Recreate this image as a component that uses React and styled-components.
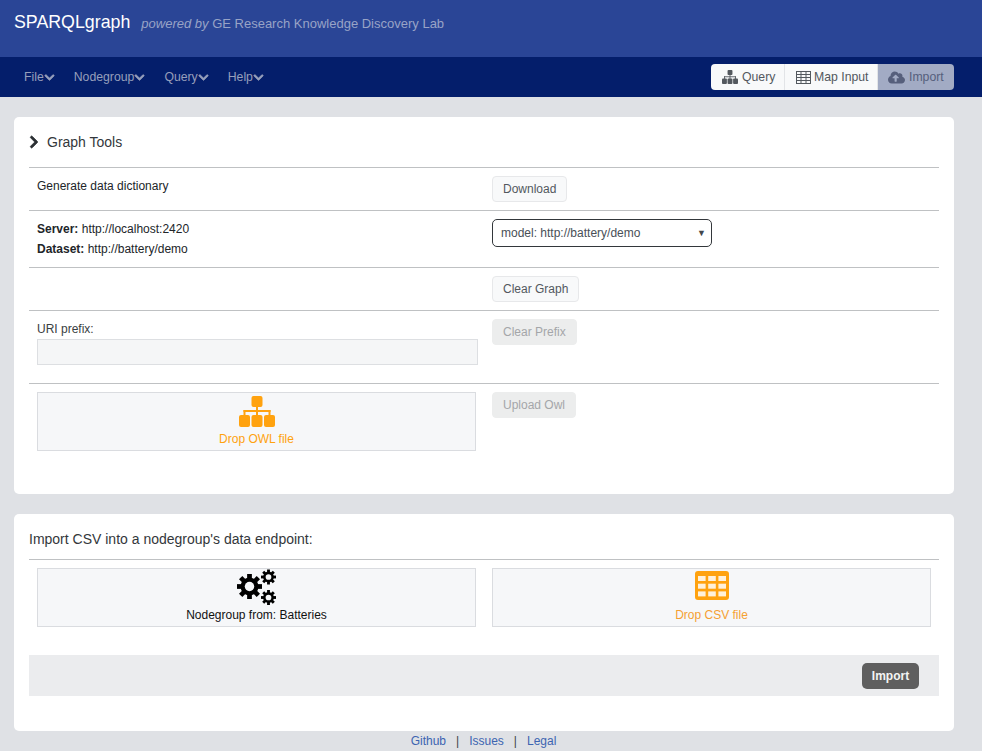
import React from 'react';
import styled, { createGlobalStyle } from 'styled-components';
import { FaChevronDown, FaChevronRight, FaCloudUploadAlt } from 'react-icons/fa';

const GlobalStyle = createGlobalStyle`
  html, body {
    margin: 0;
    padding: 0;
    height: 751px;
    overflow: hidden;
    background: #dfe1e5;
    font-family: "Liberation Sans", Arial, sans-serif;
    font-size: 12.25px;
    color: #212529;
  }
  * { box-sizing: border-box; }
`;

const Banner = styled.header`
  height: 57px;
  background: #2a4596;
  padding: 12px 14px 0;
  display: flex;
  align-items: baseline;
  gap: 11px;
`;

const Brand = styled.span`
  color: #fff;
  font-size: 17.8px;
`;

const Tagline = styled.span`
  color: #98a3c6;
  font-size: 13px;
`;

const NavBar = styled.nav`
  height: 40px;
  background: #041e6b;
  padding: 0 28px 0 24px;
  display: flex;
  align-items: center;
  justify-content: space-between;
`;

const Menus = styled.div`
  display: flex;
  gap: 19px;
`;

const Menu = styled.span`
  display: flex;
  align-items: center;
  color: #969fbb;
  font-size: 12.25px;
  svg { width: 11px; height: 11px; margin-top: 1px; stroke: currentColor; stroke-width: 30; }
`;

const Tabs = styled.div`
  display: flex;
  height: 26px;
  border-radius: 4px;
  overflow: hidden;
`;

const Tab = styled.span`
  width: ${p => p.$width}px;
  display: flex;
  align-items: center;
  gap: ${p => p.$gap}px;
  padding-left: ${p => (p.$active ? 10 : 11)}px;
  background: ${p => (p.$active ? '#a2abc4' : '#f8f9fa')};
  color: ${p => (p.$active ? '#565f7c' : '#53585e')};
  border-right: ${p => (p.$active ? 'none' : '1px solid #e2e4e7')};
`;

const Main = styled.main`
  padding: 20px 28px 0 14px;
  display: flex;
  flex-direction: column;
  gap: 20px;
`;

const Card = styled.section`
  background: #fff;
  border-radius: 5px;
  padding: 0 15px;
  height: ${p => p.$height}px;
`;

const ToolsHeading = styled.h2`
  margin: 0;
  height: 50px;
  display: flex;
  align-items: center;
  gap: 8px;
  font-weight: 400;
  font-size: 14px;
  color: #33373b;
  svg { width: 10px; height: 14px; color: #2b2f33; stroke: currentColor; stroke-width: 30; }
`;

const Row = styled.div`
  display: grid;
  grid-template-columns: 455px 455px;
  border-top: 1px solid #bfc1c3;
  height: ${p => p.$height}px;
`;

const Cell = styled.div`
  padding: 8px 8px 0;
`;

const PlainText = styled.div`
  line-height: 20px;
  font-size: 12px;
  strong { font-weight: 700; }
`;

const Button = styled.button`
  display: block;
  height: 26px;
  padding: 0 10px;
  font: inherit;
  font-size: 12px;
  color: ${p => (p.disabled ? '#a4a6a9' : '#53585e')};
  background: ${p => (p.disabled ? '#eceded' : '#f8f9fa')};
  border: 1px solid ${p => (p.disabled ? '#eceded' : '#e7e8ea')};
  border-radius: 4px;
`;

const Select = styled.div`
  width: 220px;
  height: 28px;
  border: 1px solid #33373b;
  border-radius: 5px;
  padding: 0 5px 0 8px;
  display: flex;
  align-items: center;
  justify-content: space-between;
  font-size: 12px;
  color: #495057;
  span { font-size: 9px; color: #43474b; }
`;

const PrefixLabel = styled.div`
  font-size: 12px;
  line-height: 14px;
  color: #3a3e42;
  margin: 3px 0;
`;

const PrefixInput = styled.div`
  width: 441px;
  height: 26px;
  background: #f5f6f7;
  border: 1px solid #dddfe2;
`;

const DropZone = styled.div`
  width: 439px;
  height: 59px;
  background: #f6f7f9;
  border: 1px solid #dadce0;
  display: flex;
  flex-direction: column;
  align-items: center;
  color: ${p => p.$color};
  font-size: 12px;
  line-height: 14px;
`;

const DropIcon = styled.div`
  height: 39px;
  padding-top: ${p => p.$top}px;
  svg { display: block; }
`;

const ImportTitle = styled.h2`
  margin: 0;
  height: 45px;
  padding-top: 17px;
  font-weight: 400;
  font-size: 14px;
  line-height: 16px;
  color: #33373b;
`;

const ImportBar = styled.div`
  height: 41px;
  background: #ebecee;
  padding: 8px 20px;
  display: flex;
  justify-content: flex-end;
`;

const SubmitButton = styled.button`
  width: 57px;
  height: 26px;
  background: #5f5f5f;
  color: #f4f4f4;
  border: none;
  border-radius: 5px;
  font: inherit;
  font-size: 12px;
  font-weight: 700;
`;

const Footer = styled.footer`
  height: 20px;
  display: flex;
  align-items: center;
  justify-content: center;
  gap: 10px;
  padding-right: 15px;
  font-size: 12px;
  color: #3f4347;
  a { color: #3c64b1; text-decoration: none; }
`;

// blocks are chunkier than the package's sitemap
const SitemapIcon = ({ width, height }) => (
  <svg width={width} height={height} viewBox="0 0 36 31" fill="currentColor">
    <rect x="12.5" y="0" width="11" height="11" rx="2" />
    <rect x="17" y="10" width="2" height="11" />
    <rect x="4.5" y="14" width="27" height="2" />
    <rect x="4.5" y="14" width="2" height="6" />
    <rect x="29.5" y="14" width="2" height="6" />
    <rect x="0" y="19" width="11" height="12" rx="2" />
    <rect x="12.5" y="19" width="11" height="12" rx="2" />
    <rect x="25" y="19" width="11" height="12" rx="2" />
  </svg>
);

const OutlineTableIcon = () => (
  <svg width="15" height="13" viewBox="0 0 15 13" fill="none" stroke="currentColor" strokeWidth="1">
    <rect x="0.5" y="0.5" width="14" height="12" />
    <path d="M0.5 3.5H14.5M0.5 6.5H14.5M0.5 9.5H14.5M5 0.5V12.5M10 0.5V12.5" />
  </svg>
);

const SolidGridIcon = () => (
  <svg width="34" height="29" viewBox="0 0 34 29">
    <rect width="34" height="29" rx="3" fill="#ffa20f" />
    {[0, 1, 2].map(r => [0, 1, 2].map(c => (
      <rect key={`${r}-${c}`} x={3 + c * 10.2} y={5 + r * 7.7} width="7.6" height="5" fill="#fff" opacity="0.85" />
    )))}
  </svg>
);

const Gear = ({ cx, cy, r }) => (
  <g transform={`translate(${cx} ${cy})`}>
    {[0, 45, 90, 135].map(a => (
      <rect key={a} x={-r * 0.19} y={-r} width={r * 0.38} height={r * 2} transform={`rotate(${a})`} />
    ))}
    <circle r={r * 0.72} />
    <circle r={r * 0.38} fill="#f6f7f9" />
  </g>
);

const GearsIcon = () => (
  <svg width="39" height="36" viewBox="0 0 39 36" fill="#000">
    <Gear cx={12.5} cy={17.5} r={12.5} />
    <Gear cx={31.5} cy={8} r={7.5} />
    <Gear cx={31.5} cy={28.5} r={7.5} />
  </svg>
);

export default function App() {
  return (
    <>
      <GlobalStyle />
      <Banner>
        <Brand>SPARQLgraph</Brand>
        <Tagline><em>powered by</em> GE Research Knowledge Discovery Lab</Tagline>
      </Banner>
      <NavBar>
        <Menus>
          {['File', 'Nodegroup', 'Query', 'Help'].map(m => (
            <Menu key={m}>{m}<FaChevronDown /></Menu>
          ))}
        </Menus>
        <Tabs>
          <Tab $width={74} $gap={4}><SitemapIcon width={16} height={14} />Query</Tab>
          <Tab $width={93} $gap={3}><OutlineTableIcon />Map Input</Tab>
          <Tab $width={76} $gap={4} $active><FaCloudUploadAlt size={17} />Import</Tab>
        </Tabs>
      </NavBar>
      <Main>
        <Card $height={377}>
          <ToolsHeading><FaChevronRight />Graph Tools</ToolsHeading>
          <Row $height={43}>
            <Cell><PlainText>Generate data dictionary</PlainText></Cell>
            <Cell><Button>Download</Button></Cell>
          </Row>
          <Row $height={57}>
            <Cell>
              <PlainText>
                <strong>Server:</strong> http://localhost:2420<br />
                <strong>Dataset:</strong> http://battery/demo
              </PlainText>
            </Cell>
            <Cell>
              <Select>model: http://battery/demo<span>▼</span></Select>
            </Cell>
          </Row>
          <Row $height={43}>
            <Cell />
            <Cell><Button>Clear Graph</Button></Cell>
          </Row>
          <Row $height={73}>
            <Cell>
              <PrefixLabel>URI prefix:</PrefixLabel>
              <PrefixInput />
            </Cell>
            <Cell><Button disabled>Clear Prefix</Button></Cell>
          </Row>
          <Row $height={90}>
            <Cell>
              <DropZone $color="#ffa20f">
                <DropIcon $top={3}><SitemapIcon width={36} height={31} /></DropIcon>
                Drop OWL file
              </DropZone>
            </Cell>
            <Cell><Button disabled>Upload Owl</Button></Cell>
          </Row>
        </Card>
        <Card $height={217}>
          <ImportTitle>Import CSV into a nodegroup's data endpoint:</ImportTitle>
          <Row $height={96}>
            <Cell>
              <DropZone $color="#111">
                <DropIcon $top={0}><GearsIcon /></DropIcon>
                Nodegroup from: Batteries
              </DropZone>
            </Cell>
            <Cell>
              <DropZone $color="#f5a033">
                <DropIcon $top={2}><SolidGridIcon /></DropIcon>
                Drop CSV file
              </DropZone>
            </Cell>
          </Row>
          <ImportBar>
            <SubmitButton>Import</SubmitButton>
          </ImportBar>
        </Card>
      </Main>
      <Footer>
        <a href="#github">Github</a>|<a href="#issues">Issues</a>|<a href="#legal">Legal</a>
      </Footer>
    </>
  );
}
